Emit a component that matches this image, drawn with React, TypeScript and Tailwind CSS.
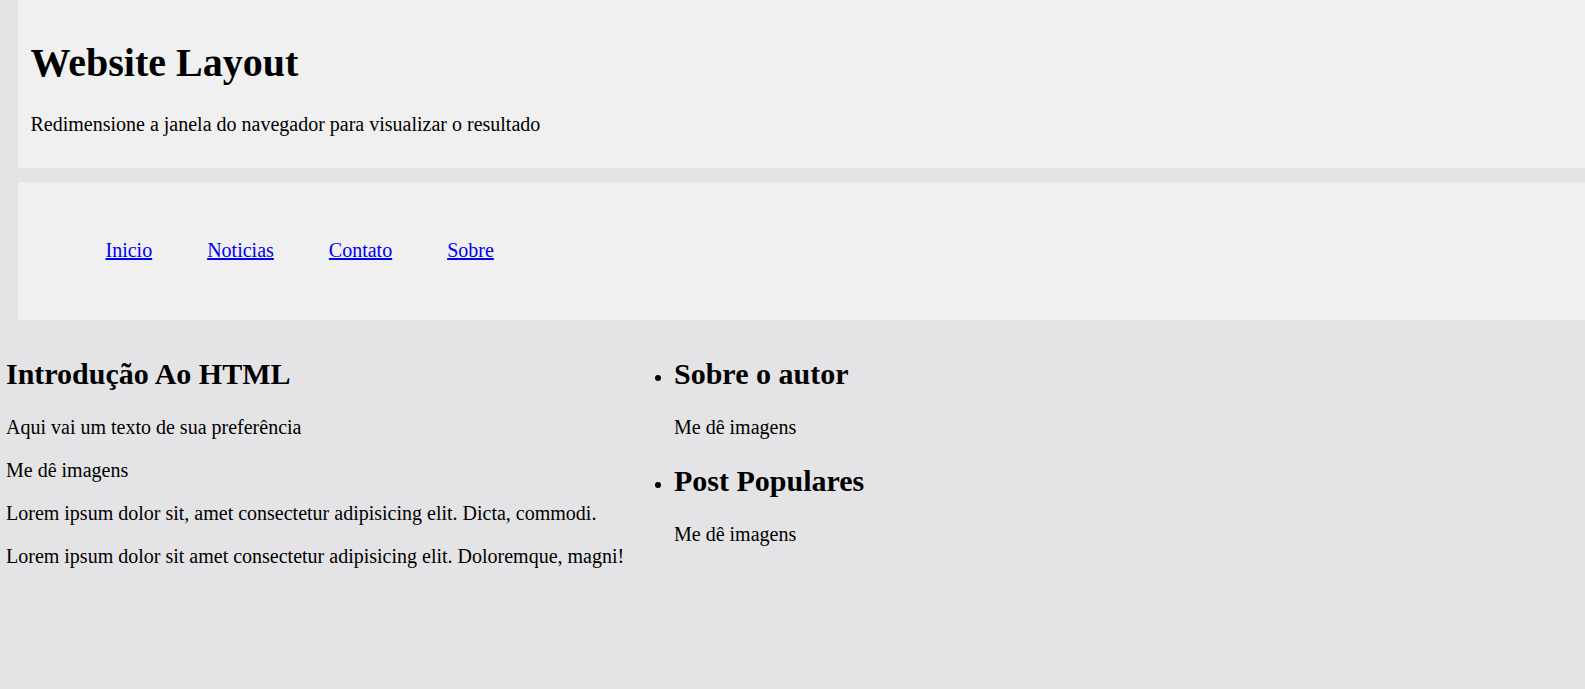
import React from 'react';

const links = ['Inicio', 'Noticias', 'Contato', 'Sobre'];

const App: React.FC = () => {
  return (
    <div className="min-h-screen bg-[#e4e4e6] font-['Liberation_Serif',serif] text-[20px] leading-[normal] text-black">
      {/* Header */}
      <header className="ml-[18px] bg-[#f0f0f0] px-[12.5px] py-[12px]">
        <h1 className="my-[26.8px] text-[40px] font-bold">Website Layout</h1>
        <p className="my-[20px]">Redimensione a janela do navegador para visualizar o resultado</p>
      </header>

      {/* Nav */}
      <nav className="ml-[18px] mt-[14px] bg-[#f0f0f0] p-[12.5px]">
        <ul className="my-[20px] flex gap-[5px] pl-[50px]">
          {links.map((l) => (
            <li key={l}>
              <a href="#" className="inline-block p-[25px] text-[#0000ee] underline">
                {l}
              </a>
            </li>
          ))}
        </ul>
      </nav>

      {/* Content */}
      <main className="flex pt-[12.5px]">
        <section className="w-[634px] shrink-0 pl-[6px]">
          <h2 className="my-[24.9px] text-[30px] font-bold">Introdução Ao HTML</h2>
          <p className="my-[20px]">Aqui vai um texto de sua preferência</p>
          <p className="my-[20px]">Me dê imagens</p>
          <p className="my-[20px]">Lorem ipsum dolor sit, amet consectetur adipisicing elit. Dicta, commodi.</p>
          <p className="my-[20px]">Lorem ipsum dolor sit amet consectetur adipisicing elit. Doloremque, magni!</p>
        </section>
        <aside className="flex-1">
          <ul className="list-disc pl-[40px]">
            <li>
              <h2 className="my-[24.9px] text-[30px] font-bold">Sobre o autor</h2>
              <p className="my-[20px]">Me dê imagens</p>
            </li>
            <li>
              <h2 className="my-[24.9px] text-[30px] font-bold">Post Populares</h2>
              <p className="my-[20px]">Me dê imagens</p>
            </li>
          </ul>
        </aside>
      </main>
    </div>
  );
};

export default App;
